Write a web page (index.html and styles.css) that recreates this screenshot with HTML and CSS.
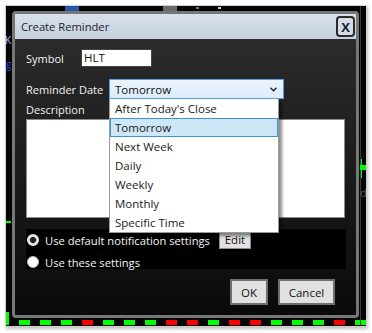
FILE: index.html
```html
<!DOCTYPE html>
<html lang="en">
  <head>
    <meta charset="utf-8" />
    <title>Create Reminder</title>
    <link rel="stylesheet" href="styles.css">
  </head>
  <body>
    <div class="screen">
      <!-- bits of the chart app showing behind the dialog -->
      <span class="bit bit-blue"></span>
      <span class="bit bit-gray"></span>
      <span class="bit bit-dot1"></span>
      <span class="bit bit-dot2"></span>
      <span class="bit bit-k">K</span>
      <span class="bit bit-g">g</span>
      <span class="bit bit-line"></span>
      <span class="bit bit-green1"></span>
      <span class="bit bit-green2"></span>
      <span class="bit bit-green3"></span>
      <span class="bit bit-green4"></span>
      <span class="bit bit-d">d</span>

      <div class="dialog">
        <div class="titlebar">
          <span class="title">Create Reminder</span>
          <button class="close-btn">X</button>
        </div>
        <div class="dialog-body">
          <div class="row">
            <label class="label">Symbol</label>
            <div class="textbox">HLT</div>
          </div>
          <div class="row row-date">
            <label class="label">Reminder Date</label>
            <div class="select">
              <span>Tomorrow</span>
              <svg class="chevron" width="7" height="5" viewBox="0 0 7 5"><polyline points="0.5,0.8 3.5,3.8 6.5,0.8" fill="none" stroke="#222" stroke-width="1.4"/></svg>
            </div>
          </div>
          <label class="label desc-label">Description</label>
          <div class="textarea"></div>
          <div class="notify">
            <div class="radio-row">
              <span class="radio checked"></span>
              <span>Use default notification settings</span>
              <button class="btn btn-edit">Edit</button>
            </div>
            <div class="radio-row">
              <span class="radio"></span>
              <span>Use these settings</span>
            </div>
          </div>
          <div class="actions">
            <button class="btn btn-ok">OK</button>
            <button class="btn btn-cancel">Cancel</button>
          </div>
        </div>

        <ul class="dropdown">
          <li>After Today's Close</li>
          <li class="selected">Tomorrow</li>
          <li>Next Week</li>
          <li>Daily</li>
          <li>Weekly</li>
          <li>Monthly</li>
          <li>Specific Time</li>
        </ul>
      </div>

      <div class="ticks">
        <span class="up"></span><span class="up"></span><span class="up"></span><span class="down"></span>
        <span class="up"></span><span class="up"></span><span class="up"></span><span class="down"></span>
        <span class="down"></span><span class="up"></span><span class="down"></span><span class="down"></span>
        <span class="up"></span><span class="up"></span><span class="up"></span><span class="down"></span>
        <span class="up"></span>
      </div>
    </div>
  </body>
</html>
```

FILE: styles.css
```css
body {
  margin: 0;
  width: 372px;
  height: 333px;
  background: #ffffff;
  font-family: 'Open Sans', 'Noto Sans', sans-serif;
  font-size: 11px;
  overflow: hidden;
}

.screen {
  position: relative;
  margin: 5px 0 0 5px;
  width: 360px;
  height: 320px;
  background: #050505;
  border: 1px solid #cfcfcf;
  box-shadow: 1px 2px 3px rgba(0,0,0,0.25);
  overflow: hidden;
}

.bit {
  position: absolute;
  display: block;
}

.bit-blue { left: 59px; top: 0; width: 14px; height: 5px; background: #2a56a8; }
.bit-gray { left: 157px; top: 0; width: 14px; height: 5px; background: #6a6a6a; }
.bit-dot1 { left: 190px; top: 1px; width: 3px; height: 2px; background: #777; }
.bit-dot2 { left: 212px; top: 1px; width: 3px; height: 2px; background: #ccc; }
.bit-k { left: -1px; top: 28px; color: #aab8ff; font-size: 10px; line-height: 12px; }
.bit-g { left: 0; top: 52px; color: #2447d8; font-size: 10px; line-height: 12px; }
.bit-line { left: 354px; top: 0; width: 1px; height: 320px; background: #3a3a3a; }
.bit-green1 { left: 354px; top: 159px; width: 6px; height: 5px; background: #00ff00; }
.bit-green2 { left: 355px; top: 153px; width: 1px; height: 19px; background: #00ff00; }
.bit-green3 { left: 0; top: 215px; width: 5px; height: 2px; background: #00ff00; }
.bit-green4 { left: 0; top: 306px; width: 3px; height: 13px; background: #00ff00; }
.bit-d { left: 354px; top: 180px; color: #555; font-size: 11px; line-height: 14px; }

.dialog {
  position: relative;
  margin: 5px 0 0 6px;
  width: 341px;
  height: 301px;
  border: 3px solid #777777;
  border-radius: 4px;
  display: flex;
  flex-direction: column;
  background: linear-gradient(#2e2e2e, #0a0a0a);
}

.titlebar {
  height: 25px;
  display: flex;
  align-items: center;
  justify-content: space-between;
  padding: 0 1px 0 6px;
  background: linear-gradient(#d8e1eb, #c4d0dd);
}

.title {
  color: #1a1e2c;
  font-size: 11.2px;
}

.close-btn {
  width: 19px;
  height: 21px;
  padding: 0;
  border: 2px solid #2b2b2b;
  border-radius: 4px;
  background: #d4dce6;
  color: #1c2233;
  font-family: 'Open Sans', sans-serif;
  font-weight: bold;
  font-size: 13px;
  line-height: 16px;
}

.dialog-body {
  flex: 1;
  padding: 10px 0 0 11px;
}

.row {
  display: flex;
  align-items: center;
  height: 18px;
}

.row-date {
  margin-top: 12px;
  height: 20px;
}

.label {
  color: #f2f2f2;
}

.row .label {
  width: 55px;
}

.row-date .label {
  width: 83px;
}

.textbox {
  width: 67px;
  height: 16px;
  padding-left: 2px;
  line-height: 16px;
  background: #ffffff;
  border: 1px solid #444;
  color: #111;
  font-size: 11.5px;
}

.select {
  width: 162px;
  height: 18px;
  padding: 0 6px 0 5px;
  display: flex;
  align-items: center;
  justify-content: space-between;
  background: linear-gradient(#ecf4fc, #dcecfc);
  border: 1px solid #5b9ddf;
  color: #111;
  font-size: 11.5px;
}

.desc-label {
  display: block;
  margin-top: 3px;
  line-height: 16px;
}

.textarea {
  margin-top: 1px;
  width: 317px;
  height: 97px;
  background: #ffffff;
  border: 1px solid #8a8a8a;
}

.notify {
  margin-top: 11px;
  width: 320px;
  height: 40px;
  background: #000000;
  color: #f4f4f4;
  font-size: 11.2px;
}

.radio-row {
  height: 22px;
  display: flex;
  align-items: center;
  padding-left: 1px;
}

.radio {
  width: 12px;
  height: 12px;
  margin-right: 6px;
  border-radius: 50%;
  background: #ffffff;
  box-sizing: border-box;
  border: 1px solid #bbbbbb;
}

.radio.checked {
  border: 2px solid #e8e8e8;
  background: radial-gradient(circle, #1e1e1e 0 2.5px, #7a7a7a 3px, #ffffff 4px);
}

.btn {
  padding: 0;
  background: #e1e1e1;
  border: 1px solid #8e8e8e;
  color: #111;
  font-family: 'Open Sans', 'Noto Sans', sans-serif;
  font-size: 11.5px;
}

.btn-edit {
  margin-left: 9px;
  width: 32px;
  height: 17px;
  line-height: 14px;
}

.actions {
  margin-top: 10px;
  display: flex;
  justify-content: flex-end;
  gap: 10px;
  padding-right: 21px;
}

.btn-ok,
.btn-cancel {
  height: 26px;
  border-width: 2px;
  border-color: #6f6f6f;
}

.btn-ok { width: 38px; }
.btn-cancel { width: 57px; }

.dropdown {
  position: absolute;
  left: 94px;
  top: 85px;
  width: 168px;
  margin: 0;
  padding: 0;
  list-style: none;
  background: #ffffff;
  border: 1px solid #9a9a9a;
  border-top: none;
  box-shadow: 3px 3px 3px rgba(0,0,0,0.45);
  color: #1a1a1a;
  font-size: 11.5px;
}

.dropdown li {
  height: 19px;
  line-height: 20px;
  padding-left: 5px;
  box-sizing: border-box;
}

.dropdown li.selected {
  background: #cde7f7;
  border: 1px solid #3b93cf;
  line-height: 18px;
  padding-left: 4px;
}

.ticks {
  display: flex;
  gap: 10px;
  margin: 2px 0 0 13px;
  height: 5px;
}

.ticks span {
  width: 11px;
  height: 5px;
}

.ticks .up { background: #00ff00; }
.ticks .down { background: #ff0000; }
```
